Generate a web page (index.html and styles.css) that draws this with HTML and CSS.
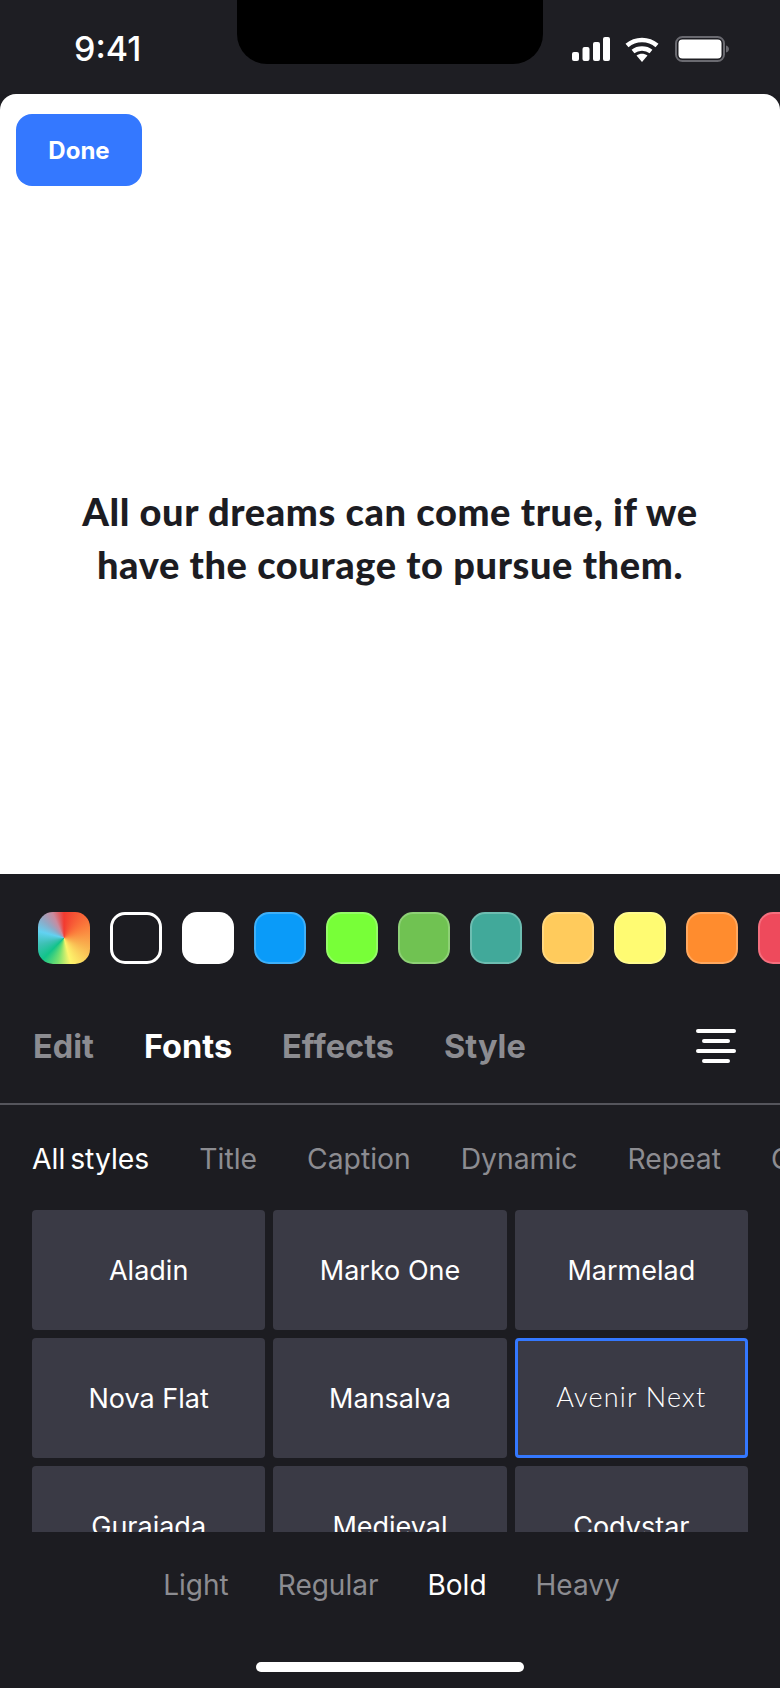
FILE: index.html
```html
<!DOCTYPE html>
<html lang="en">
<head>
    <meta charset="UTF-8">
    <meta name="viewport" content="width=device-width, initial-scale=1.0">
    <title>Text Editor - Fonts</title>
    <link rel="stylesheet" href="styles.css">
</head>
<body>
    <div class="status-bar">
        <div class="time">9:41</div>
        <div class="notch"></div>
        <div class="status-icons">
            <svg class="signal" width="38" height="24" viewBox="0 0 38 24">
                <rect x="0" y="15" width="7" height="9" rx="2" fill="#fff"/>
                <rect x="10.500" y="10" width="7" height="14" rx="2" fill="#fff"/>
                <rect x="21" y="5" width="7" height="19" rx="2" fill="#fff"/>
                <rect x="31" y="0" width="7" height="24" rx="2" fill="#fff"/>
            </svg>
            <svg class="wifi" width="34" height="25" viewBox="0 0 34 25">
                <path d="M2 8.500 C10.500 1 23.500 1 32 8.500" fill="none" stroke="#fff" stroke-width="4.500"/>
                <path d="M8 14.500 C13 10.500 21 10.500 26 14.500" fill="none" stroke="#fff" stroke-width="4.500"/>
                <path d="M11.500 18.500 C15 16 19 16 22.500 18.500 L17 25 Z" fill="#fff"/>
            </svg>
            <svg class="battery" width="54" height="26" viewBox="0 0 54 26">
                <rect x="1" y="1" width="48" height="24" rx="6.500" fill="none" stroke="#6a6a70" stroke-width="2"/>
                <rect x="3.500" y="3.500" width="43" height="19" rx="4" fill="#fff"/>
                <path d="M51 9.500 C53 10 54 11.500 54 13 C54 14.500 53 16 51 16.500 Z" fill="#6a6a70"/>
            </svg>
        </div>
    </div>

    <div class="sheet">
        <button class="done-btn">Done</button>
        <p class="quote">All our dreams can come true, if we<br>have the courage to pursue them.</p>
    </div>

    <div class="panel">
        <div class="swatches">
            <div class="swatch rainbow"></div>
            <div class="swatch outline"></div>
            <div class="swatch white"></div>
            <div class="swatch blue"></div>
            <div class="swatch lime"></div>
            <div class="swatch green"></div>
            <div class="swatch teal"></div>
            <div class="swatch amber"></div>
            <div class="swatch yellow"></div>
            <div class="swatch orange"></div>
            <div class="swatch red"></div>
        </div>

        <div class="tabs">
            <span class="tab">Edit</span>
            <span class="tab active">Fonts</span>
            <span class="tab">Effects</span>
            <span class="tab">Style</span>
            <svg class="align-icon" width="40" height="36" viewBox="0 0 40 36">
                <rect x="0" y="0" width="40" height="4" rx="2" fill="#fff"/>
                <rect x="6" y="10" width="28" height="4" rx="2" fill="#fff"/>
                <rect x="0" y="20" width="40" height="4" rx="2" fill="#fff"/>
                <rect x="6" y="30" width="28" height="4" rx="2" fill="#fff"/>
            </svg>
        </div>

        <div class="chips">
            <span class="chip active">All styles</span>
            <span class="chip">Title</span>
            <span class="chip">Caption</span>
            <span class="chip">Dynamic</span>
            <span class="chip">Repeat</span>
            <span class="chip">Glitch</span>
        </div>

        <div class="font-grid">
            <div class="font-card">Aladin</div>
            <div class="font-card">Marko One</div>
            <div class="font-card">Marmelad</div>
            <div class="font-card">Nova Flat</div>
            <div class="font-card">Mansalva</div>
            <div class="font-card selected">Avenir Next</div>
            <div class="font-card">Gurajada</div>
            <div class="font-card">Medieval</div>
            <div class="font-card">Codystar</div>
        </div>

        <div class="weights">
            <span class="weight">Light</span>
            <span class="weight">Regular</span>
            <span class="weight active">Bold</span>
            <span class="weight">Heavy</span>
        </div>

        <div class="home-bar"></div>
    </div>
</body>
</html>
```

FILE: styles.css
```css
body {
    margin: 0;
    width: 780px;
    height: 1688px;
    overflow: hidden;
    background-color: #1c1c21;
    font-family: Inter, "Noto Sans", sans-serif;
    color: #fff;
}
.status-bar {
    height: 94px;
    display: flex;
    justify-content: space-between;
    background-color: #1e1e23;
}
.time {
    width: 237px;
    box-sizing: border-box;
    padding: 29px 0 0 74px;
    font-size: 34px;
    line-height: 40px;
    font-weight: 500;
}
.notch {
    width: 306px;
    height: 64px;
    background-color: #000;
    border-radius: 0 0 30px 30px;
}
.status-icons {
    width: 237px;
    box-sizing: border-box;
    padding: 36px 0 0 29px;
    display: flex;
    align-items: flex-start;
}
.signal {
    margin-top: 1px;
    margin-right: 15px;
}
.wifi {
    margin-top: 1px;
    margin-right: 16px;
}
.sheet {
    height: 780px;
    background-color: #fff;
    border-radius: 16px 16px 0 0;
    padding: 20px 16px 0;
    box-sizing: border-box;
}
.done-btn {
    display: block;
    width: 126px;
    height: 72px;
    background-color: #3478ff;
    color: #fff;
    border: none;
    border-radius: 16px;
    font-family: Inter, sans-serif;
    font-size: 24px;
    font-weight: 700;
    padding: 1px 0 0;
}
.quote {
    margin: 299px 0 0;
    text-align: center;
    color: #1c1c22;
    font-family: Lato, sans-serif;
    font-size: 38px;
    font-weight: 900;
    line-height: 53px;
    letter-spacing: 0.6px;
}
.panel {
    height: 814px;
    overflow: hidden;
}
.swatches {
    display: flex;
    gap: 20px;
    padding: 38px 0 0 38px;
    overflow: hidden;
}
.swatch {
    width: 52px;
    height: 52px;
    flex-shrink: 0;
    box-sizing: border-box;
    border-radius: 15px;
    border: 2px solid transparent;
}
.rainbow {
    border: none;
    background: conic-gradient(#f23a30, #fb7a3b 60deg, #f9b24f 110deg, #fdf56c 165deg, #76e06f 195deg, #12c38a 225deg, #3ec1b5 255deg, #62d2f2 285deg, #8fa9c6 310deg, #c98b9f 335deg, #f23a30);
}
.outline {
    border: 3px solid #fff;
}
.white {
    background-color: #fff;
}
.blue {
    background-color: #0a9bf9;
    border-color: #3fb0f8;
}
.lime {
    background-color: #78ff38;
    border-color: #95fb68;
}
.green {
    background-color: #70c252;
    border-color: #8ed176;
}
.teal {
    background-color: #41a99a;
    border-color: #6dbdb1;
}
.amber {
    background-color: #ffcb5c;
    border-color: #ffd77f;
}
.yellow {
    background-color: #fffb72;
    border-color: #fffb8f;
}
.orange {
    background-color: #ff8c2e;
    border-color: #ffa85f;
}
.red {
    background-color: #ee4a5c;
    border-color: #f56f7e;
}
.tabs {
    height: 141px;
    box-sizing: border-box;
    display: flex;
    align-items: center;
    gap: 50px;
    padding: 26px 44px 0 33px;
    border-bottom: 2px solid #55555c;
}
.tab {
    font-size: 32.500px;
    font-weight: 700;
    color: #8c8c91;
}
.tab.active {
    color: #fff;
}
.align-icon {
    margin-left: auto;
}
.chips {
    display: flex;
    gap: 50px;
    padding: 37px 0 0 32px;
    height: 72px;
    box-sizing: border-box;
    white-space: nowrap;
}
.chip {
    font-size: 28.300px;
    line-height: 34px;
    word-spacing: -3px;
    color: #8c8c91;
}
.chip.active {
    color: #fff;
}
.font-grid {
    display: grid;
    grid-template-columns: repeat(3, 1fr);
    grid-auto-rows: 120px;
    gap: 8px;
    height: 322px;
    margin: 33px 32px 0;
    overflow: hidden;
}
.font-card {
    display: flex;
    align-items: center;
    justify-content: center;
    background-color: #3a3a45;
    border-radius: 4px;
    font-size: 27px;
}
.font-card.selected {
    box-sizing: border-box;
    border: 3px solid #3478ff;
    padding-bottom: 4px;
    font-family: Lato, sans-serif;
    font-weight: 300;
    letter-spacing: 1.200px;
}
.weights {
    display: flex;
    justify-content: center;
    gap: 49px;
    padding: 34px 0 0 3px;
    height: 130px;
    box-sizing: border-box;
}
.weight {
    font-size: 28px;
    line-height: 38px;
    color: #8c8c91;
}
.weight.active {
    color: #fff;
}
.home-bar {
    width: 268px;
    height: 10px;
    margin: 0 auto;
    background-color: #fff;
    border-radius: 5px;
}
```
